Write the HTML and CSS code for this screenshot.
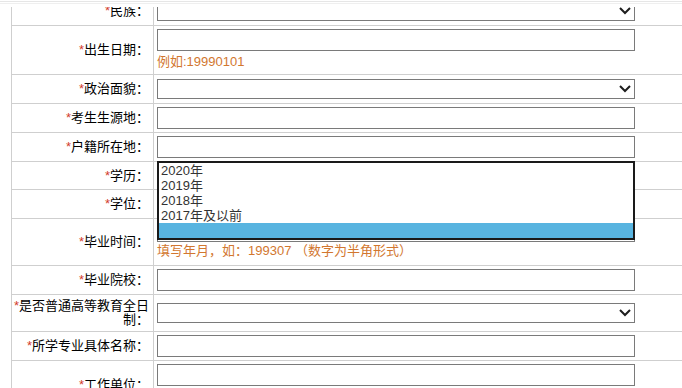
FILE: index.html
```html
<!DOCTYPE html>
<html lang="zh-CN">
<head>
  <meta charset="UTF-8" />
  <meta name="viewport" content="width=device-width, initial-scale=1" />
  <title>考生信息</title>
  <link rel="stylesheet" href="styles.css">
</head>
<body>

  <div class="topbar"></div>

  <div class="form">
    <div class="row">
      <div class="label"><span><i class="req">*</i>民族：</span></div>
      <div class="field">
        <span class="sel"><select></select><svg class="arrow" viewBox="0 0 12 8"><polyline points="1,1 6,6 11,1" /></svg></span>
      </div>
    </div>

    <div class="row tall">
      <div class="label"><span><i class="req">*</i>出生日期：</span></div>
      <div class="field top">
        <input type="text" />
        <div class="hint hint-date">例如:19990101</div>
      </div>
    </div>

    <div class="row">
      <div class="label"><span><i class="req">*</i>政治面貌：</span></div>
      <div class="field">
        <span class="sel"><select></select><svg class="arrow" viewBox="0 0 12 8"><polyline points="1,1 6,6 11,1" /></svg></span>
      </div>
    </div>

    <div class="row">
      <div class="label"><span><i class="req">*</i>考生生源地：</span></div>
      <div class="field"><input type="text" /></div>
    </div>

    <div class="row">
      <div class="label"><span><i class="req">*</i>户籍所在地：</span></div>
      <div class="field"><input type="text" /></div>
    </div>

    <div class="row short">
      <div class="label"><span><i class="req">*</i>学历：</span></div>
      <div class="field">
        <span class="sel"><select></select><svg class="arrow" viewBox="0 0 12 8"><polyline points="1,1 6,6 11,1" /></svg></span>
      </div>
    </div>

    <div class="row">
      <div class="label"><span><i class="req">*</i>学位：</span></div>
      <div class="field">
        <span class="sel"><select></select><svg class="arrow" viewBox="0 0 12 8"><polyline points="1,1 6,6 11,1" /></svg></span>
      </div>
    </div>

    <div class="row grad">
      <div class="label"><span><i class="req">*</i>毕业时间：</span></div>
      <div class="field top">
        <span class="sel">
          <select></select><svg class="arrow" viewBox="0 0 12 8"><polyline points="1,1 6,6 11,1" /></svg>
          <ul class="listbox">
            <li>2020年</li>
            <li>2019年</li>
            <li>2018年</li>
            <li>2017年及以前</li>
            <li class="active">&nbsp;</li>
          </ul>
        </span>
        <div class="hint">填写年月，如：199307 （数字为半角形式）</div>
      </div>
    </div>

    <div class="row">
      <div class="label"><span><i class="req">*</i>毕业院校：</span></div>
      <div class="field"><input type="text" /></div>
    </div>

    <div class="row double">
      <div class="label"><span><i class="req">*</i>是否普通高等教育全日制：</span></div>
      <div class="field">
        <span class="sel"><select></select><svg class="arrow" viewBox="0 0 12 8"><polyline points="1,1 6,6 11,1" /></svg></span>
      </div>
    </div>

    <div class="row">
      <div class="label"><span><i class="req">*</i>所学专业具体名称：</span></div>
      <div class="field"><input type="text" /></div>
    </div>

    <div class="row tall">
      <div class="label"><span><i class="req">*</i>工作单位：</span></div>
      <div class="field top">
        <input type="text" />
      </div>
    </div>
  </div>

</body>
</html>
```

FILE: styles.css
```css
body {
  margin: 0;
  font-family: "Liberation Sans", "Noto Sans CJK SC", sans-serif;
  font-size: 13px;
  color: #000;
  background-color: #fff;
  overflow: hidden;
}

/* fixed header strip, page is scrolled under it */
.topbar {
  position: fixed;
  top: 0;
  left: 0;
  right: 0;
  height: 7px;
  z-index: 30;
  background: linear-gradient(#fff 0 1px, #e6e6e6 1px 2px, #fff 2px 3px, #efefef 3px 4px, #fff 4px);
}

.form {
  width: 820px;
  margin: -3px 0 0 11px;
  border-left: 1px solid #cfcfcf;
}

.row {
  display: flex;
  height: 28px;
  border-bottom: 1px solid #cfcfcf;
}

.row.short { height: 27px; }
.row.tall { height: 48px; }
.row.grad { height: 46px; }
.row.double { height: 36px; }

.label {
  width: 142px;
  box-sizing: border-box;
  flex-shrink: 0;
  display: flex;
  align-items: center;
  justify-content: flex-end;
  padding-right: 4px;
  border-right: 1px solid #cfcfcf;
  text-align: right;
  line-height: 14px;
}

.req {
  font-style: normal;
  color: #d23b2a;
}

.field {
  flex: 1;
  display: flex;
  flex-direction: column;
  justify-content: center;
  padding: 0 3px;
}

.field.top {
  justify-content: flex-start;
  padding-top: 3px;
}

input,
select {
  width: 478px;
  box-sizing: border-box;
  margin: 0;
  border: 1px solid #7a7a7a;
  background-color: #fff;
  font: inherit;
}

input {
  height: 22px;
}

select {
  height: 20px;
  appearance: none;
  -webkit-appearance: none;
  border-radius: 0;
}

.sel {
  position: relative;
  display: block;
  width: 478px;
  height: 20px;
}

.arrow {
  position: absolute;
  right: 4px;
  top: 6px;
  width: 12px;
  height: 8px;
  fill: none;
  stroke: #1e1e1e;
  stroke-width: 2;
  pointer-events: none;
}

.hint {
  color: #d2772f;
  line-height: 16px;
  margin-top: 1px;
}

.hint-date {
  margin-top: 3px;
}

/* the open dropdown of 毕业时间 */
.listbox {
  position: absolute;
  left: 0;
  bottom: 2px;
  width: 478px;
  box-sizing: border-box;
  margin: 0;
  padding: 0;
  list-style: none;
  border: 2px solid #1a1a1a;
  background-color: #fff;
  z-index: 10;
}

.listbox li {
  height: 15px;
  line-height: 15px;
  padding-left: 2px;
  color: #333;
}

.listbox li.active {
  background-color: #58b4e0;
}
```
